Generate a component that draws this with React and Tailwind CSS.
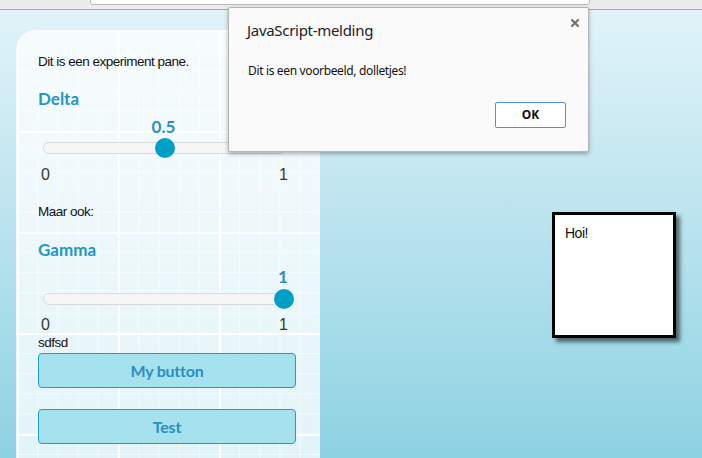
import React from "react";

const narrow = "font-['Liberation_Sans',Arial,sans-serif] tracking-[-0.5px]";
const lato = "font-['Lato',sans-serif]";

function Slider({ value, valueLabel, gapTop, gapTrack, gapLabels }) {
  const pct = value;
  return (
    <div>
      <div className={`relative h-[20px] ${gapTop}`}>
        <span
          className={`absolute top-0 -translate-x-1/2 ${lato} font-bold text-[17px] leading-[20px] text-[#2b8fc1]`}
          style={{ left: `${6 + pct * 239}px` }}
        >
          {valueLabel}
        </span>
      </div>
      <div className={`relative ml-[5px] w-[242px] h-[12px] rounded-full bg-[#f6f6f6] border border-[#d9d9d9] ${gapTrack}`}>
        <div
          className="absolute top-1/2 w-[20px] h-[20px] -translate-x-1/2 -translate-y-1/2 rounded-full bg-[#009fc6]"
          style={{ left: `${1 + pct * 239}px` }}
        />
      </div>
      <div className={`flex justify-between w-[250px] pl-[3px] ${gapLabels} font-['Liberation_Sans',Arial,sans-serif] text-[16px] leading-[20px] text-[#3a3530]`}>
        <span>0</span>
        <span>1</span>
      </div>
    </div>
  );
}

export default function App() {
  return (
    <div className="relative w-[702px] h-[458px] overflow-hidden bg-[#e2f4f9]">
      {/* browser strip */}
      <div className="h-[10px] bg-[#ececec] border-b border-[#a9a9a9] relative">
        <div className="absolute left-[90px] top-[-4px] w-[500px] h-[9px] bg-white border border-[#b9b9b9] rounded-[3px]" />
      </div>
      <div className="h-[448px] bg-gradient-to-b from-[#e1f3f9] to-[#8dd2e2] pl-[16px] pt-[20px]">
        {/* panel */}
        <div className="w-[304px] h-[440px] rounded-t-[20px] bg-white/75 [background-image:linear-gradient(to_right,#ffffff_1.5px,transparent_1.5px),linear-gradient(to_bottom,#ffffff_1.5px,transparent_1.5px),linear-gradient(to_right,rgba(255,255,255,0.55)_1px,transparent_1px),linear-gradient(to_bottom,rgba(255,255,255,0.55)_1px,transparent_1px)] [background-size:101px_101px,101px_101px,20.2px_20.2px,20.2px_20.2px] [background-position:1px_0px,0px_0px,1px_0px,0px_0px] pt-[22px] px-[22px]">
          <p className={`${narrow} text-[13.5px] leading-[20px] text-[#111]`}>Dit is een experiment pane.</p>
          <h3 className={`mt-[17px] ${lato} font-bold text-[17px] leading-[20px] text-[#1b98c4]`}>Delta</h3>
          <Slider value={0.5} valueLabel="0.5" gapTop="mt-[8px]" gapTrack="mt-[5px]" gapLabels="mt-[11px]" />
          <p className={`mt-[17px] ${narrow} text-[13.5px] leading-[20px] text-[#111]`}>Maar ook:</p>
          <h3 className={`mt-[18px] ${lato} font-bold text-[17px] leading-[20px] text-[#1b98c4]`}>Gamma</h3>
          <Slider value={1} valueLabel="1" gapTop="mt-[7px]" gapTrack="mt-[6px]" gapLabels="mt-[10px]" />
          <p className={`${narrow} text-[13.5px] leading-[16px] text-[#111]`}>sdfsd</p>
          <button className={`mt-[2px] w-[258px] h-[35px] rounded-[4px] bg-[#a6e1ee] border border-[#17a1c8] ${lato} font-bold text-[16px] tracking-[-0.2px] text-[#2890c0]`}>
            My button
          </button>
          <button className={`mt-[21px] w-[258px] h-[35px] rounded-[4px] bg-[#a6e1ee] border border-[#17a1c8] ${lato} font-bold text-[16px] tracking-[-0.2px] text-[#2890c0]`}>
            Test
          </button>
        </div>
      </div>

      {/* Hoi box */}
      <div className={`absolute left-[552px] top-[212px] w-[124px] h-[126px] bg-white border-[3px] border-black shadow-[4px_4px_4px_rgba(0,0,0,0.55)] pl-[10px] pt-[9px] ${narrow} text-[14px] leading-[18px] text-[#111]`}>
        Hoi!
      </div>

      {/* JS dialog */}
      <div className="absolute left-[228px] top-[7px] w-[361px] h-[145px] bg-[#fafafa] border border-[#b4b4b4] rounded-[2px] shadow-[0_2px_4px_rgba(0,0,0,0.3)] font-['Noto_Sans',sans-serif]">
        <div className="pl-[18px] pt-[12px] text-[15px] leading-[20px] tracking-[-0.3px] text-[#222]">JavaScript-melding</div>
        <svg className="absolute left-[342px] top-[11px]" width="8" height="8" viewBox="0 0 8 8">
          <path d="M1 1L7 7M7 1L1 7" stroke="#6f6f6f" strokeWidth="2" strokeLinecap="square" />
        </svg>
        <div className="pl-[19px] pt-[23px] text-[12px] leading-[16px] tracking-[-0.35px] text-[#111]">Dit is een voorbeeld, dolletjes!</div>
        <div className="flex justify-end pr-[22px] pt-[23px]">
          <button className="w-[71px] h-[26px] bg-white border border-[#4f8fe8] rounded-[2px] text-[12px] font-bold text-[#111]">OK</button>
        </div>
      </div>
    </div>
  );
}
